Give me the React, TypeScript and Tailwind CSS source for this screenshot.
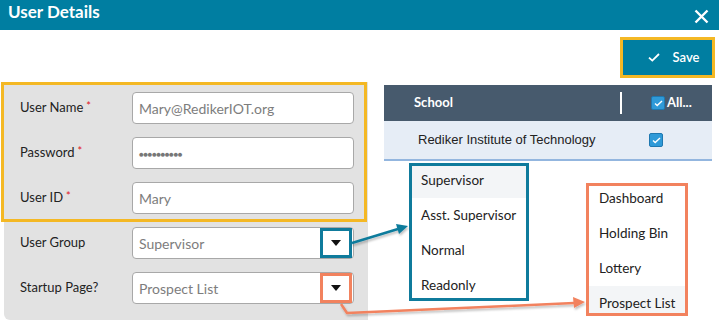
import React from 'react';

const Asterisk = () => <span className="text-[#e0141e] text-[11px] align-top ml-[3px]">*</span>;

const Caret = () => (
    <svg width="10" height="6" viewBox="0 0 10 6">
        <path d="M0 0h10L5 6z" fill="#111" />
    </svg>
);

const CheckBox = () => (
    <span className="w-[14px] h-[14px] rounded-[2px] bg-[#2f9ad8] border border-[#1f78b0] flex items-center justify-center">
        <svg width="9" height="7" viewBox="0 0 9 7">
            <path d="M1 3.6l2.2 2L8 1" fill="none" stroke="#fff" strokeWidth="1.4" />
        </svg>
    </span>
);

const Field = ({ label, required, value, select, boxColor, dots }: { label: string; required?: boolean; value: string; select?: boolean; boxColor?: string; dots?: boolean }) => (
    <div className="flex items-center h-[32px]">
        <div className="w-[128px] pl-[16px] text-[13px] text-[#222]">
            {label}
            {required && <Asterisk />}
        </div>
        <div className="w-[222px] h-[32px] bg-white border border-[#a8a8a8] rounded-[4px] flex items-center justify-between pl-[6px] pr-[1px]">
            {dots ? (
                <span className="text-[8px] tracking-[-0.5px] text-[#777] pt-[1px]">{value}</span>
            ) : (
                <span className="text-[14px] text-[#7d7d7d]">{value}</span>
            )}
            {select && (
                <span className={`w-[32px] h-[30px] border-[3px] flex items-center justify-center ${boxColor}`}>
                    <Caret />
                </span>
            )}
        </div>
    </div>
);

const App = () => {
    return (
        <div className="w-[719px] h-[324px] bg-white relative overflow-hidden font-['Lato',sans-serif]">
            {/* Header */}
            <div className="h-[30px] bg-[#007ea1] flex items-center justify-between pl-[8px] pr-[10px]">
                <h1 className="text-white font-bold text-[17px] leading-none -mt-[8px]">User Details</h1>
                <svg width="15" height="15" viewBox="0 0 15 15" className="mt-[2px]">
                    <path d="M1.5 1.5l12 12M13.5 1.5l-12 12" stroke="#fff" strokeWidth="2.4" />
                </svg>
            </div>

            {/* Save */}
            <div className="flex justify-end pr-[4px] pt-[7px]">
                <div className="w-[95px] h-[41px] border-[3px] border-[#f4b824] bg-[#007ea1] flex items-center justify-center gap-[13px] pl-[12px]">
                    <svg width="12" height="9" viewBox="0 0 12 9">
                        <path d="M1 4.6l3.3 3L11 1" fill="none" stroke="#fff" strokeWidth="1.8" />
                    </svg>
                    <span className="text-white text-[13px] font-semibold">Save</span>
                </div>
            </div>

            <div className="flex mt-[4px]">
                {/* Left panel */}
                <div className="ml-[4px] w-[364px] h-[238px] bg-[#e2e2e2] rounded-bl-[6px] flex flex-col">
                    <div className="-ml-[3px] w-[366px] border-[3px] border-[#f4b824] pt-[7px] pb-[5px] flex flex-col gap-[13px]">
                        <Field label="User Name" required value="Mary@RedikerIOT.org" />
                        <Field label="Password" required value="●●●●●●●●●●" dots />
                        <Field label="User ID" required value="Mary" />
                    </div>
                    <div className="mt-[5px] flex flex-col gap-[13px]">
                        <Field label="User Group" value="Supervisor" select boxColor="border-[#0f7b9c]" />
                        <Field label="Startup Page?" value="Prospect List" select boxColor="border-[#f2825e]" />
                    </div>
                </div>

                {/* Right column */}
                <div className="ml-[16px] w-[328px] pt-[3px] flex flex-col">
                    <div className="h-[36px] bg-[#475a6d] flex items-center text-white text-[13px] font-bold">
                        <span className="pl-[30px] w-[236px]">School</span>
                        <span className="w-[2px] h-[22px] bg-white" />
                        <span className="ml-[29px] flex items-center gap-[2px]">
                            <CheckBox />
                            All...
                        </span>
                    </div>
                    <div className="h-[40px] bg-[#e6edf6] border-b-[2px] border-[#93b6df] flex items-center">
                        <span className="pl-[34px] w-[265px] text-[13px] text-[#222] font-['Liberation_Sans',sans-serif]">Rediker Institute of Technology</span>
                        <CheckBox />
                    </div>

                    <div className="flex">
                        {/* User group list */}
                        <div className="ml-[25px] mt-[2px] w-[120px] h-[138px] border-[3px] border-[#0f7b9c] bg-white overflow-hidden text-[13.5px] text-[#222]">
                            <div className="-mt-[3px] flex flex-col">
                                <div className="h-[35px] pl-[9px] flex items-center bg-[#f3f5f7]">Supervisor</div>
                                <div className="h-[35px] pl-[9px] flex items-center">Asst. Supervisor</div>
                                <div className="h-[35px] pl-[9px] flex items-center">Normal</div>
                                <div className="h-[35px] pl-[9px] flex items-center">Readonly</div>
                            </div>
                        </div>
                        {/* Startup list */}
                        <div className="ml-[57px] mt-[22px] w-[102px] h-[133px] border-[3px] border-[#f2825e] bg-white overflow-hidden text-[13.5px] text-[#222]">
                            <div className="-mt-[5px] flex flex-col">
                                <div className="h-[35px] pl-[10px] flex items-center">Dashboard</div>
                                <div className="h-[35px] pl-[10px] flex items-center">Holding Bin</div>
                                <div className="h-[35px] pl-[10px] flex items-center">Lottery</div>
                                <div className="h-[35px] pl-[10px] flex items-center bg-[#f3f5f7]">Prospect List</div>
                            </div>
                        </div>
                    </div>
                </div>
            </div>

            {/* Connector arrows */}
            <svg className="absolute inset-0 pointer-events-none" width="719" height="324">
                <defs>
                    <filter id="sh" x="-10%" y="-50%" width="120%" height="200%">
                        <feDropShadow dx="1" dy="2" stdDeviation="1" floodColor="#000" floodOpacity="0.25" />
                    </filter>
                </defs>
                <g filter="url(#sh)">
                    <path d="M352 243L398 229" stroke="#0f7b9c" strokeWidth="2.5" fill="none" />
                    <path d="M408 226L396 224L399 234z" fill="#0f7b9c" />
                    <path d="M341 304L347 313L574 303" stroke="#f2825e" strokeWidth="2.5" fill="none" strokeLinejoin="round" />
                    <path d="M585 302L573 297L574 308z" fill="#f2825e" />
                </g>
            </svg>
        </div>
    );
};

export default App;
